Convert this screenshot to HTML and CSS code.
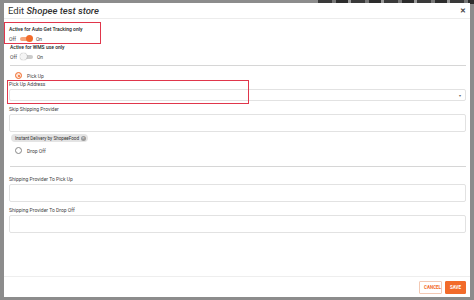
FILE: index.html
```html
<!DOCTYPE html>
<html lang="en">
<head>
    <meta charset="UTF-8">
    <title>Edit Shopee test store</title>
    <link rel="stylesheet" href="styles.css">
</head>
<body>
    <div class="backdrop-strip"></div>
    <div class="modal">
        <div class="modal-header">
            <span class="title">Edit <i>Shopee test store</i></span>
            <span class="close">&#10005;</span>
        </div>

        <div class="modal-body">
            <div class="switch-block marked-small">
                <div class="label strong">Active for Auto Get Tracking only</div>
                <div class="switch-row">
                    <span>Off</span>
                    <span class="switch on"><span class="knob"></span></span>
                    <span>On</span>
                </div>
            </div>
            <div class="switch-block plain">
                <div class="label strong">Active for WMS use only</div>
                <div class="switch-row">
                    <span>Off</span>
                    <span class="switch"><span class="knob"></span></span>
                    <span>On</span>
                </div>
            </div>

            <div class="divider"></div>

            <div class="radio-row">
                <span class="radio checked"></span>
                <span>Pick Up</span>
            </div>

            <div class="field-wrap">
                <div class="marked-wide"></div>
                <div class="label">Pick Up Address</div>
                <div class="field select"><span class="caret">&#9662;</span></div>
            </div>

            <div class="label">Skip Shipping Provider</div>
            <div class="field tall"></div>

            <div class="chip">Instant Delivery by ShopeeFood <span class="chip-x">&#10005;</span></div>

            <div class="radio-row">
                <span class="radio"></span>
                <span>Drop Off</span>
            </div>

            <div class="divider second"></div>

            <div class="label">Shipping Provider To Pick Up</div>
            <div class="field tall"></div>

            <div class="label gap">Shipping Provider To Drop Off</div>
            <div class="field tall"></div>
        </div>

        <div class="modal-footer">
            <button class="btn cancel">CANCEL</button>
            <button class="btn save">SAVE</button>
        </div>
    </div>
</body>
</html>
```

FILE: styles.css
```css
body {
    margin: 0;
    padding: 0;
    width: 474px;
    height: 300px;
    overflow: hidden;
    background: #8c8c8c;
    font-family: Roboto, "Liberation Sans", Arial, sans-serif;
    color: #333;
    position: relative;
}

.backdrop-strip {
    position: absolute;
    top: 0;
    left: 318px;
    width: 156px;
    height: 4px;
    background: repeating-linear-gradient(90deg, #3a3a3a 0 14px, #777 14px 18px, #2c2c2c 18px 30px, #999 30px 33px);
}

.modal {
    position: relative;
    margin-left: 4px;
    top: 3px;
    width: 466px;
    height: 294px;
    background: #fff;
    display: flex;
    flex-direction: column;
    font-size: 5px;
}

.modal-header {
    height: 16px;
    display: flex;
    align-items: center;
    justify-content: space-between;
    padding: 0 4px 0 4px;
    border-bottom: 1px solid #ececec;
    box-sizing: border-box;
}

.title {
    font-size: 9.5px;
    color: #333;
}

.title i {
    font-weight: 500;
}

.close {
    font-size: 7px;
    color: #444;
    font-weight: bold;
}

.modal-body {
    flex: 1;
    padding: 3px 4px 0 5px;
    position: relative;
}

.label {
    font-size: 5px;
    color: #444;
    line-height: 7px;
}

.label.strong {
    font-weight: 500;
    color: #222;
}

.label.gap {
    margin-top: 5px;
}

.switch-block {
    padding: 4px 0 0 1px;
    height: 22px;
    box-sizing: border-box;
    width: 97px;
}

.switch-block.plain {
    padding-top: 0;
    height: auto;
}

.marked-small {
    margin-left: -5px;
    padding-left: 5px;
    outline: 1.5px solid #e0364b;
    outline-offset: -1px;
}

.switch-row {
    display: flex;
    align-items: center;
    gap: 4px;
    margin-top: 2px;
    height: 7px;
    font-size: 5px;
    color: #444;
}

.switch {
    position: relative;
    width: 12px;
    height: 4px;
    border-radius: 2px;
    background: #ccc;
}

.switch.on {
    background: #f6a57b;
}

.knob {
    position: absolute;
    top: -2px;
    left: -1px;
    width: 7px;
    height: 7px;
    border-radius: 50%;
    background: #f4f4f4;
    box-shadow: 0 0 1px rgba(0, 0, 0, 0.5);
}

.switch.on .knob {
    left: 6px;
    background: #f26b2a;
    box-shadow: none;
}

.divider {
    height: 1px;
    background: #d6d6d6;
    margin: 5px 0 5px 1px;
}

.divider.second {
    margin: 11px 0 9px 1px;
}

.radio-row {
    display: flex;
    align-items: center;
    gap: 5px;
    padding-left: 6px;
    height: 9px;
    font-size: 5px;
    color: #444;
}

.radio {
    width: 5px;
    height: 5px;
    border: 1px solid #888;
    border-radius: 50%;
    display: flex;
    align-items: center;
    justify-content: center;
}

.radio.checked {
    border-color: #f26b2a;
    background: #fde3d6;
}

.radio.checked::after {
    content: "";
    width: 2px;
    height: 2px;
    border-radius: 50%;
    background: #f26b2a;
}

.field-wrap {
    position: relative;
    margin-top: 0;
    padding-top: 1px;
    margin-bottom: 5px;
}

.marked-wide {
    position: absolute;
    top: 0;
    left: -2px;
    width: 242px;
    height: 24px;
    border: 1.5px solid #e0364b;
    box-sizing: border-box;
}

.field {
    border: 1px solid #e2e2e2;
    border-radius: 2px;
    height: 12px;
    box-sizing: border-box;
    margin-top: 1px;
    margin-bottom: 2px;
}

.field.select {
    display: flex;
    align-items: center;
    justify-content: flex-end;
    padding-right: 4px;
}

.caret {
    font-size: 4px;
    color: #666;
}

.field.tall {
    height: 18px;
}

.chip {
    display: flex;
    width: fit-content;
    align-items: center;
    gap: 2px;
    margin: 1px 0 4px 2px;
    padding: 1px 2px 1px 4px;
    height: 8px;
    box-sizing: border-box;
    background: #e4e4e4;
    border-radius: 4px;
    font-size: 4.6px;
    color: #333;
}

.chip-x {
    width: 5px;
    height: 5px;
    border-radius: 50%;
    background: #9a9a9a;
    color: #fff;
    font-size: 3px;
    display: flex;
    align-items: center;
    justify-content: center;
}

.modal-footer {
    height: 21px;
    border-top: 1px solid #eeeeee;
    display: flex;
    align-items: center;
    justify-content: flex-end;
    gap: 3px;
    padding-right: 4px;
    box-sizing: border-box;
}

.btn {
    height: 13px;
    font-family: inherit;
    font-size: 4.5px;
    font-weight: bold;
    border-radius: 1px;
    padding: 0 4px;
    cursor: pointer;
}

.btn.cancel {
    background: #fff;
    color: #f26b2a;
    border: 1px solid #f3c9b4;
    width: 23px;
}

.btn.save {
    background: #f26b2a;
    color: #fff;
    border: 1px solid #f26b2a;
    width: 21px;
}
```
